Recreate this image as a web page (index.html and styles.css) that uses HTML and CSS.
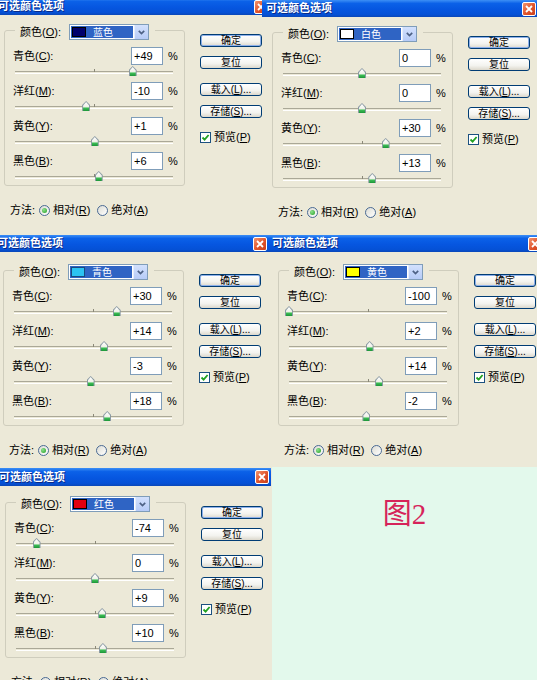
FILE: index.html
```html
<!DOCTYPE html>
<html lang="zh-CN">
<head>
  <meta charset="UTF-8">
  <meta name="viewport" content="width=device-width, initial-scale=1.0">
  <title>可选颜色选项</title>
  <link rel="stylesheet" href="styles.css">
</head>
<body>
  <!-- 第一排：蓝色 / 白色 -->
  <div class="row row-1">
    <div class="cell cell-a">
      <div class="dlg dlg-a">
        <div class="dlg-title"><span class="dlg-caption">可选颜色选项</span><span class="dlg-close"><svg width="8" height="8" viewBox="0 0 8 8"><path d="M1 1L7 7M7 1L1 7"/></svg></span></div>
        <div class="dlg-body">
          <div class="dlg-main">
            <fieldset class="group">
              <legend class="group-head">
                <span>颜色(<u>O</u>):</span>
                <span class="pick"><span class="pick-sel"><i class="swatch sw-blue"></i>蓝色</span><span class="pick-btn"><svg width="7" height="5" viewBox="0 0 7 5"><path d="M0.8 0.8L3.5 3.5L6.2 0.8"/></svg></span></span>
              </legend>
              <div class="inks">
                <div class="ink-line"><span>青色(<u>C</u>):</span><input class="num" value="+49" readonly><span class="pct">%</span></div>
                <div class="track"><i class="thumb" style="--v:49"></i></div>
                <div class="ink-line"><span>洋红(<u>M</u>):</span><input class="num" value="-10" readonly><span class="pct">%</span></div>
                <div class="track"><i class="thumb" style="--v:-10"></i></div>
                <div class="ink-line"><span>黄色(<u>Y</u>):</span><input class="num" value="+1" readonly><span class="pct">%</span></div>
                <div class="track"><i class="thumb" style="--v:1"></i></div>
                <div class="ink-line"><span>黑色(<u>B</u>):</span><input class="num" value="+6" readonly><span class="pct">%</span></div>
                <div class="track"><i class="thumb" style="--v:6"></i></div>
              </div>
            </fieldset>
            <div class="method">
              <span>方法:</span>
              <span class="opt"><i class="radio on"></i>相对(<u>R</u>)</span>
              <span class="opt"><i class="radio"></i>绝对(<u>A</u>)</span>
            </div>
          </div>
          <div class="dlg-side">
            <button class="btn btn-default">确定</button>
            <button class="btn">复位</button>
            <button class="btn btn-gap">载入(<u>L</u>)...</button>
            <button class="btn">存储(<u>S</u>)...</button>
            <span class="check"><i class="box"><svg width="9" height="9" viewBox="0 0 9 9"><path d="M1.5 4.5L3.6 6.6L7.6 2"/></svg></i>预览(<u>P</u>)</span>
          </div>
        </div>
      </div>
    </div>
    <div class="cell cell-b">
      <div class="dlg dlg-b">
        <div class="dlg-title"><span class="dlg-caption">可选颜色选项</span><span class="dlg-close"><svg width="8" height="8" viewBox="0 0 8 8"><path d="M1 1L7 7M7 1L1 7"/></svg></span></div>
        <div class="dlg-body">
          <div class="dlg-main">
            <fieldset class="group">
              <legend class="group-head">
                <span>颜色(<u>O</u>):</span>
                <span class="pick"><span class="pick-sel"><i class="swatch sw-white"></i>白色</span><span class="pick-btn"><svg width="7" height="5" viewBox="0 0 7 5"><path d="M0.8 0.8L3.5 3.5L6.2 0.8"/></svg></span></span>
              </legend>
              <div class="inks">
                <div class="ink-line"><span>青色(<u>C</u>):</span><input class="num" value="0" readonly><span class="pct">%</span></div>
                <div class="track"><i class="thumb" style="--v:0"></i></div>
                <div class="ink-line"><span>洋红(<u>M</u>):</span><input class="num" value="0" readonly><span class="pct">%</span></div>
                <div class="track"><i class="thumb" style="--v:0"></i></div>
                <div class="ink-line"><span>黄色(<u>Y</u>):</span><input class="num" value="+30" readonly><span class="pct">%</span></div>
                <div class="track"><i class="thumb" style="--v:30"></i></div>
                <div class="ink-line"><span>黑色(<u>B</u>):</span><input class="num" value="+13" readonly><span class="pct">%</span></div>
                <div class="track"><i class="thumb" style="--v:13"></i></div>
              </div>
            </fieldset>
            <div class="method">
              <span>方法:</span>
              <span class="opt"><i class="radio on"></i>相对(<u>R</u>)</span>
              <span class="opt"><i class="radio"></i>绝对(<u>A</u>)</span>
            </div>
          </div>
          <div class="dlg-side">
            <button class="btn btn-default">确定</button>
            <button class="btn">复位</button>
            <button class="btn btn-gap">载入(<u>L</u>)...</button>
            <button class="btn">存储(<u>S</u>)...</button>
            <span class="check"><i class="box"><svg width="9" height="9" viewBox="0 0 9 9"><path d="M1.5 4.5L3.6 6.6L7.6 2"/></svg></i>预览(<u>P</u>)</span>
          </div>
        </div>
      </div>
    </div>
  </div>

  <!-- 第二排：青色 / 黄色 -->
  <div class="row row-2">
    <div class="cell cell-c">
      <div class="dlg dlg-c">
        <div class="dlg-title"><span class="dlg-caption">可选颜色选项</span><span class="dlg-close"><svg width="8" height="8" viewBox="0 0 8 8"><path d="M1 1L7 7M7 1L1 7"/></svg></span></div>
        <div class="dlg-body">
          <div class="dlg-main">
            <fieldset class="group">
              <legend class="group-head">
                <span>颜色(<u>O</u>):</span>
                <span class="pick"><span class="pick-sel"><i class="swatch sw-cyan"></i>青色</span><span class="pick-btn"><svg width="7" height="5" viewBox="0 0 7 5"><path d="M0.8 0.8L3.5 3.5L6.2 0.8"/></svg></span></span>
              </legend>
              <div class="inks">
                <div class="ink-line"><span>青色(<u>C</u>):</span><input class="num" value="+30" readonly><span class="pct">%</span></div>
                <div class="track"><i class="thumb" style="--v:30"></i></div>
                <div class="ink-line"><span>洋红(<u>M</u>):</span><input class="num" value="+14" readonly><span class="pct">%</span></div>
                <div class="track"><i class="thumb" style="--v:14"></i></div>
                <div class="ink-line"><span>黄色(<u>Y</u>):</span><input class="num" value="-3" readonly><span class="pct">%</span></div>
                <div class="track"><i class="thumb" style="--v:-3"></i></div>
                <div class="ink-line"><span>黑色(<u>B</u>):</span><input class="num" value="+18" readonly><span class="pct">%</span></div>
                <div class="track"><i class="thumb" style="--v:18"></i></div>
              </div>
            </fieldset>
            <div class="method">
              <span>方法:</span>
              <span class="opt"><i class="radio on"></i>相对(<u>R</u>)</span>
              <span class="opt"><i class="radio"></i>绝对(<u>A</u>)</span>
            </div>
          </div>
          <div class="dlg-side">
            <button class="btn btn-default">确定</button>
            <button class="btn">复位</button>
            <button class="btn btn-gap">载入(<u>L</u>)...</button>
            <button class="btn">存储(<u>S</u>)...</button>
            <span class="check"><i class="box"><svg width="9" height="9" viewBox="0 0 9 9"><path d="M1.5 4.5L3.6 6.6L7.6 2"/></svg></i>预览(<u>P</u>)</span>
          </div>
        </div>
      </div>
    </div>
    <div class="cell cell-d">
      <div class="dlg dlg-d">
        <div class="dlg-title"><span class="dlg-caption">可选颜色选项</span><span class="dlg-close"><svg width="8" height="8" viewBox="0 0 8 8"><path d="M1 1L7 7M7 1L1 7"/></svg></span></div>
        <div class="dlg-body">
          <div class="dlg-main">
            <fieldset class="group">
              <legend class="group-head">
                <span>颜色(<u>O</u>):</span>
                <span class="pick"><span class="pick-sel"><i class="swatch sw-yellow"></i>黄色</span><span class="pick-btn"><svg width="7" height="5" viewBox="0 0 7 5"><path d="M0.8 0.8L3.5 3.5L6.2 0.8"/></svg></span></span>
              </legend>
              <div class="inks">
                <div class="ink-line"><span>青色(<u>C</u>):</span><input class="num" value="-100" readonly><span class="pct">%</span></div>
                <div class="track"><i class="thumb" style="--v:-100"></i></div>
                <div class="ink-line"><span>洋红(<u>M</u>):</span><input class="num" value="+2" readonly><span class="pct">%</span></div>
                <div class="track"><i class="thumb" style="--v:2"></i></div>
                <div class="ink-line"><span>黄色(<u>Y</u>):</span><input class="num" value="+14" readonly><span class="pct">%</span></div>
                <div class="track"><i class="thumb" style="--v:14"></i></div>
                <div class="ink-line"><span>黑色(<u>B</u>):</span><input class="num" value="-2" readonly><span class="pct">%</span></div>
                <div class="track"><i class="thumb" style="--v:-2"></i></div>
              </div>
            </fieldset>
            <div class="method">
              <span>方法:</span>
              <span class="opt"><i class="radio on"></i>相对(<u>R</u>)</span>
              <span class="opt"><i class="radio"></i>绝对(<u>A</u>)</span>
            </div>
          </div>
          <div class="dlg-side">
            <button class="btn btn-default">确定</button>
            <button class="btn">复位</button>
            <button class="btn btn-gap">载入(<u>L</u>)...</button>
            <button class="btn">存储(<u>S</u>)...</button>
            <span class="check"><i class="box"><svg width="9" height="9" viewBox="0 0 9 9"><path d="M1.5 4.5L3.6 6.6L7.6 2"/></svg></i>预览(<u>P</u>)</span>
          </div>
        </div>
      </div>
    </div>
  </div>

  <!-- 第三排：红色 + 说明 -->
  <div class="row row-3">
    <div class="cell cell-e">
      <div class="dlg dlg-e">
        <div class="dlg-title"><span class="dlg-caption">可选颜色选项</span><span class="dlg-close"><svg width="8" height="8" viewBox="0 0 8 8"><path d="M1 1L7 7M7 1L1 7"/></svg></span></div>
        <div class="dlg-body">
          <div class="dlg-main">
            <fieldset class="group">
              <legend class="group-head">
                <span>颜色(<u>O</u>):</span>
                <span class="pick"><span class="pick-sel"><i class="swatch sw-red"></i>红色</span><span class="pick-btn"><svg width="7" height="5" viewBox="0 0 7 5"><path d="M0.8 0.8L3.5 3.5L6.2 0.8"/></svg></span></span>
              </legend>
              <div class="inks">
                <div class="ink-line"><span>青色(<u>C</u>):</span><input class="num" value="-74" readonly><span class="pct">%</span></div>
                <div class="track"><i class="thumb" style="--v:-74"></i></div>
                <div class="ink-line"><span>洋红(<u>M</u>):</span><input class="num" value="0" readonly><span class="pct">%</span></div>
                <div class="track"><i class="thumb" style="--v:0"></i></div>
                <div class="ink-line"><span>黄色(<u>Y</u>):</span><input class="num" value="+9" readonly><span class="pct">%</span></div>
                <div class="track"><i class="thumb" style="--v:9"></i></div>
                <div class="ink-line"><span>黑色(<u>B</u>):</span><input class="num" value="+10" readonly><span class="pct">%</span></div>
                <div class="track"><i class="thumb" style="--v:10"></i></div>
              </div>
            </fieldset>
            <div class="method">
              <span>方法:</span>
              <span class="opt"><i class="radio on"></i>相对(<u>R</u>)</span>
              <span class="opt"><i class="radio"></i>绝对(<u>A</u>)</span>
            </div>
          </div>
          <div class="dlg-side">
            <button class="btn btn-default">确定</button>
            <button class="btn">复位</button>
            <button class="btn btn-gap">载入(<u>L</u>)...</button>
            <button class="btn">存储(<u>S</u>)...</button>
            <span class="check"><i class="box"><svg width="9" height="9" viewBox="0 0 9 9"><path d="M1.5 4.5L3.6 6.6L7.6 2"/></svg></i>预览(<u>P</u>)</span>
          </div>
        </div>
      </div>
    </div>
    <div class="note">图2</div>
  </div>
</body>
</html>
```

FILE: styles.css
```css
body {
  margin: 0;
  width: 537px;
  height: 680px;
  overflow: hidden;
  background: #ece9d8;
  color: #000;
  font: 11px/13px "Liberation Sans", "Noto Sans CJK SC", sans-serif;
}

/* 三排拼图 */
.row {
  display: flex;
  overflow: hidden;
}
.row-1 { height: 233px; }
.row-2 { height: 232px; }
.row-3 { height: 215px; }
.cell {
  flex: none;
  overflow: hidden;
}
.cell-a { width: 262px; }
.cell-b { width: 275px; }
.cell-c { width: 268px; }
.cell-d { width: 269px; }
.cell-e { width: 272px; }

/* 对话框 */
.dlg {
  width: 276px;
  --top: 8px;
}
.dlg-a { margin: -2px 0 0 -6px; --top: 5px; }
.dlg-b { --top: 5px; }
.dlg-c { margin: 2px 0 0 -7px; }
.dlg-d { margin-top: 2px; }
.dlg-e { margin: 3px 0 0 -5px; --top: 6px; }

.dlg-title {
  height: 17px;
  display: flex;
  align-items: center;
  padding-left: 4px;
  background: linear-gradient(#3d8ff5 0, #0b61e8 20%, #0656e0 55%, #0551d6 85%, #0a47b8 100%);
}
.dlg-e .dlg-title { height: 18px; }
.dlg-caption {
  color: #fff;
  font-weight: bold;
  font-size: 11px;
  text-shadow: 1px 1px 0 #0a2a86;
}
.dlg-close {
  margin-left: auto;
  margin-right: 2px;
  width: 12px;
  height: 12px;
  border: 1px solid #fff;
  border-radius: 2px;
  background: linear-gradient(135deg, #f0946e, #e0532b 55%, #c9401c);
  display: flex;
  align-items: center;
  justify-content: center;
}
.dlg-close path {
  stroke: #fff;
  stroke-width: 1.8;
}

.dlg-body {
  display: flex;
  padding: var(--top) 0 0 10px;
}
.dlg-main {
  width: 181px;
}

/* 分组框 */
.group {
  box-sizing: border-box;
  width: 181px;
  min-width: 0;
  margin: 0;
  padding: 0;
  border: 1px solid #cfcdbd;
  border-radius: 3px;
}
.group-head {
  display: flex;
  align-items: center;
  margin-left: 10px;
  padding: 4px 6px 0 5px;
}
.pick {
  display: flex;
  width: 80px;
  height: 16px;
  box-sizing: border-box;
  margin-left: 8px;
  border: 1px solid #7f9db9;
  background: #fff;
}
.pick-sel {
  flex: 1;
  display: flex;
  align-items: center;
  margin: 1px;
  background: #2f64c4;
  color: #fff;
  font-size: 10px;
}
.swatch {
  width: 14px;
  height: 10px;
  box-sizing: border-box;
  border: 1px solid #000;
  margin: 0 7px 0 1px;
}
.sw-blue { background: #00006c; }
.sw-white { background: #fff; }
.sw-cyan { background: #2cc3f2; border-color: #1a4a80; }
.sw-yellow { background: #ffff00; }
.sw-red { background: #e00010; }
.pick-btn {
  width: 13px;
  display: flex;
  align-items: center;
  justify-content: center;
  background: linear-gradient(#d3e1fd, #b6cbf7);
  border-left: 1px solid #e6eefc;
}
.pick-btn path {
  fill: none;
  stroke: #4d6185;
  stroke-width: 1.7;
}

/* 油墨滑块 */
.inks {
  padding-top: 7px;
}
.ink-line {
  display: grid;
  grid-template-columns: 118px 32px auto;
  align-items: center;
  height: 18px;
  padding-left: 8px;
}
.num {
  box-sizing: border-box;
  width: 32px;
  height: 18px;
  margin: 0;
  padding: 0 2px;
  border: 1px solid #7f9db9;
  background: #fff;
  font: inherit;
  color: #000;
  outline: none;
}
.pct {
  margin-left: 5px;
}
.track {
  position: relative;
  width: 158px;
  height: 1px;
  margin: 6px 0 8px 10px;
  border-top: 1px solid #aaa897;
  border-bottom: 1px solid #fff;
}
.track:last-child {
  margin-bottom: 6px;
}
.track::after {
  content: "";
  position: absolute;
  left: 79px;
  top: -3px;
  width: 1px;
  height: 3px;
  background: #8a8878;
}
.thumb {
  position: absolute;
  top: -6px;
  left: calc(75px + var(--v) * 0.79px);
  width: 8px;
  height: 10px;
  background: #8b9aa3;
  clip-path: polygon(50% 0, 100% 40%, 100% 100%, 0 100%, 0 40%);
  z-index: 1;
}
.thumb::before {
  content: "";
  position: absolute;
  inset: 1px 1px 0;
  background: linear-gradient(#ffffff, #eef0e6 60%, #43c35b 62%, #1c9638);
  clip-path: polygon(50% 0, 100% 40%, 100% 100%, 0 100%, 0 40%);
}

/* 方法 */
.method {
  display: flex;
  align-items: center;
  height: 14px;
  margin-top: 17px;
  padding-left: 6px;
}
.opt {
  display: flex;
  align-items: center;
  margin-left: 4px;
}
.opt + .opt {
  margin-left: 7px;
}
.radio {
  width: 11px;
  height: 11px;
  box-sizing: border-box;
  margin-right: 3px;
  border: 1px solid #4a6a94;
  border-radius: 50%;
  background: linear-gradient(135deg, #dcdcd4, #fff);
  display: flex;
  align-items: center;
  justify-content: center;
}
.radio.on::after {
  content: "";
  width: 5px;
  height: 5px;
  border-radius: 50%;
  background: radial-gradient(circle at 35% 35%, #8fe08f, #21a121);
}

/* 右侧按钮 */
.dlg-side {
  display: flex;
  flex-direction: column;
  align-items: flex-start;
  width: 62px;
  margin-left: 15px;
  padding-top: 14px;
}
.btn {
  box-sizing: border-box;
  width: 62px;
  height: 13px;
  margin: 0 0 9px;
  padding: 0;
  border: 1px solid #003c74;
  border-radius: 3px;
  background: linear-gradient(#ffffff, #f3f3ef 60%, #dcd8cc);
  font: inherit;
  font-size: 10px;
  line-height: 11px;
  color: #000;
}
.btn-default {
  box-shadow: inset 0 0 0 1px #8eb0ea;
}
.btn-gap {
  margin-top: 5px;
}
.check {
  display: flex;
  align-items: center;
  margin-top: 4px;
}
.box {
  width: 11px;
  height: 11px;
  box-sizing: border-box;
  margin-right: 3px;
  border: 1px solid #1c5180;
  background: #fff;
  display: flex;
  align-items: center;
  justify-content: center;
}
.box path {
  fill: none;
  stroke: #21a121;
  stroke-width: 1.8;
}

/* 说明区 */
.note {
  flex: 1;
  margin-top: 2px;
  padding-top: 31px;
  background: #e3f9ec;
  color: #d6245a;
  font: 29px/32px "Liberation Serif", "Noto Sans CJK SC", serif;
  text-align: center;
}
```
